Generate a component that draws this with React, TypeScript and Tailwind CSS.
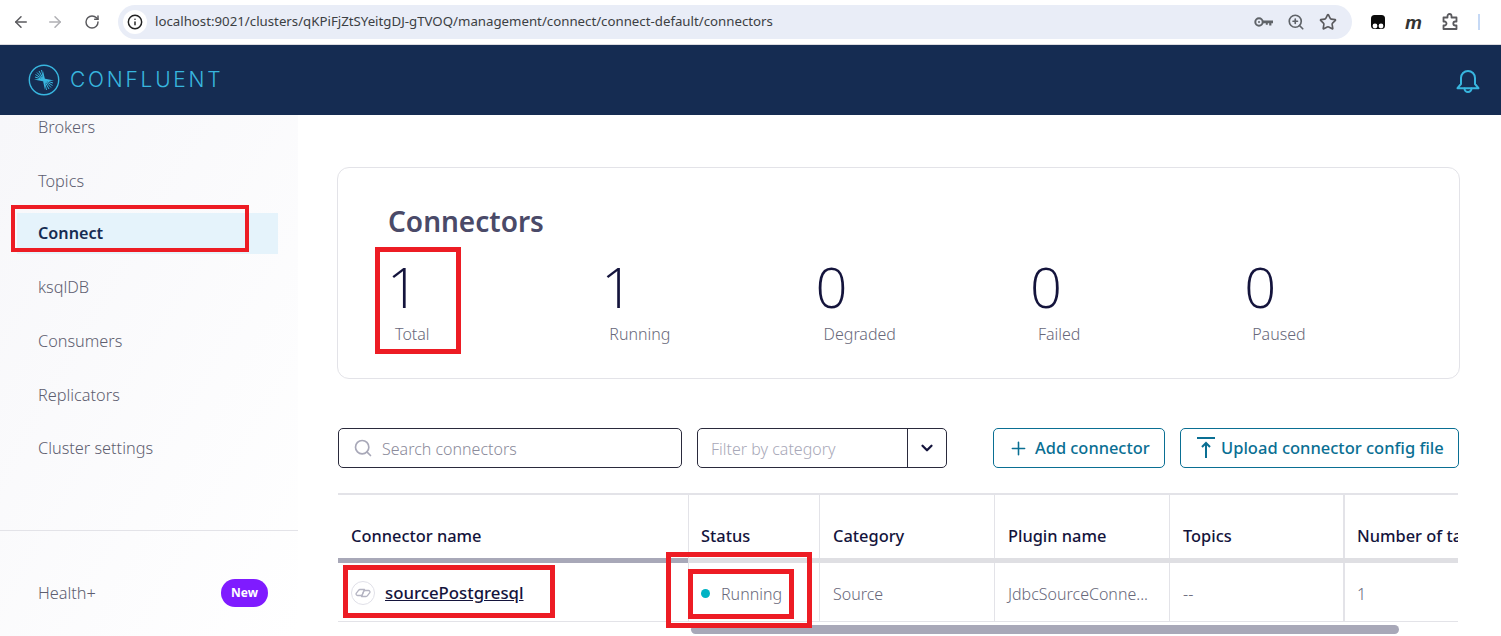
import { ArrowLeft, ArrowRight, RotateCw, Info, ZoomIn, Star, Search, ChevronDown, Plus } from "lucide-react";

const font = { fontFamily: '"Noto Sans", sans-serif' };

function KeyIcon() {
  return (
    <svg width="19" height="12" viewBox="0 0 19 12" fill="none">
      <circle cx="5" cy="6" r="3.7" stroke="#5f6368" strokeWidth="2" />
      <circle cx="5" cy="6" r="1" fill="#5f6368" />
      <path d="M9 4.5h10v2.8h-1.6V9.6h-2.2V7.3h-1.4v1.5h-2V7.3H9z" fill="#5f6368" />
    </svg>
  );
}

function Tamper() {
  return (
    <svg width="16" height="16" viewBox="0 0 16 16">
      <rect x="1" y="1" width="14" height="14" rx="3.5" fill="#0b0b0b" />
      <circle cx="5" cy="12" r="2.4" fill="#fff" />
      <circle cx="11" cy="12" r="2.4" fill="#fff" />
    </svg>
  );
}

function ExtensionIcon() {
  return (
    <svg width="18" height="18" viewBox="0 0 18 18" fill="none" stroke="#5a5a5e" strokeWidth="1.8" strokeLinejoin="round">
      <path d="M2.5 4.5H6.5V3a2 2 0 0 1 4 0v1.5h5v4h-1.2a2 2 0 0 0 0 4h1.2v3.5H2.5V12.5h1a2 2 0 0 0 0-4h-1z" />
    </svg>
  );
}

function BellIcon() {
  return (
    <svg width="24" height="25" viewBox="0 0 24 25" fill="none" stroke="#38b6df" strokeWidth="2" strokeLinejoin="round" strokeLinecap="round">
      <path d="M5 15V9a7 7 0 0 1 14 0v6l3.5 4.2H1.5z" />
      <path d="M8.5 19.5a3.5 3.5 0 0 0 7 0" />
    </svg>
  );
}

function Logo() {
  const rays = [
    [7, 13], [7.5, 10.5], [9, 8.5], [11, 7], [13.5, 6],
    [25, 19], [24.5, 21.5], [23, 23.5], [21, 25], [18.5, 26],
  ];
  return (
    <svg width="32" height="32" viewBox="0 0 32 32" fill="none" stroke="#38b6df">
      <circle cx="16" cy="16" r="14.7" strokeWidth="1.4" />
      {rays.map((r, i) => (
        <line key={i} x1="16" y1="16" x2={r[0]} y2={r[1]} strokeWidth="1" />
      ))}
      <path d="M6 15.5L16 14.6 26 16.5 16 17.4zM15 7L17.2 16 17 26 14.8 16z" fill="#38b6df" stroke="none" />
    </svg>
  );
}

function UploadIcon() {
  return (
    <svg width="20" height="24" viewBox="0 0 20 24" fill="none" stroke="#0a6f93" strokeWidth="2">
      <path d="M1 2h18" />
      <path d="M10 22V7" />
      <path d="M6 11l4-4 4 4" />
    </svg>
  );
}

function ConnectorBadge() {
  return (
    <svg width="24" height="24" viewBox="0 0 24 24" fill="none">
      <circle cx="12" cy="12" r="11.5" stroke="#e0e0e8" />
      <g stroke="#b4b4c2" strokeWidth="1.3" strokeLinejoin="round">
        <path d="M9 8.5H13.5L11 14.5H6.5a1.5 1.5 0 0 1-1.3-2.2L7.5 9.3A2 2 0 0 1 9 8.5z" />
        <path d="M15 15.5H10.5L13 9.5H17.5a1.5 1.5 0 0 1 1.3 2.2L16.5 14.7A2 2 0 0 1 15 15.5z" />
      </g>
    </svg>
  );
}

function NavItem({ label, active }: { label: string; active?: boolean }) {
  return (
    <div
      className={
        active
          ? "ml-[17px] mr-[20px] -mt-[1.5px] mb-[0.5px] h-[41px] pl-[21px] flex items-center bg-[#e5f3fb] text-[#152c52] font-semibold text-[16.2px]"
          : "ml-[17px] mr-[20px] h-[41px] pl-[21px] flex items-center text-[#5e5e70] font-light text-[16.3px]"
      }
    >
      {label}
    </div>
  );
}

function Stat({ n, label }: { n: string; label: string }) {
  return (
    <div className="w-[214.3px] shrink-0">
      <div className="h-[75px] pt-[10px] -ml-[1px] text-[56px] leading-[56px] font-light text-[#14143c]" style={{ fontFamily: '"Open Sans", sans-serif' }}>{n}</div>
      <div className="pl-[7px] text-[16px] leading-[22px] font-light text-[#68687a]">{label}</div>
    </div>
  );
}

const COLS = [
  { w: "w-[350px]", title: "Connector name", border: "", pad: "pl-[13px]" },
  { w: "w-[131px]", title: "Status", border: "border-l border-[#e3e3e8]", pad: "pl-[12px]" },
  { w: "w-[175px]", title: "Category", border: "border-l border-[#e3e3e8]", pad: "pl-[13px]" },
  { w: "w-[175px]", title: "Plugin name", border: "border-l border-[#e3e3e8]", pad: "pl-[13px]" },
  { w: "w-[174px]", title: "Topics", border: "border-l border-[#e3e3e8]", pad: "pl-[13px]" },
  { w: "w-[115px]", title: "Number of tasks", border: "border-l-2 border-[#e3e3e8]", pad: "pl-[12px]" },
];

export default function App() {
  return (
    <div className="relative w-[1501px] h-[636px] overflow-hidden bg-white flex flex-col" style={font}>
      {/* browser bar */}
      <div className="h-[45px] shrink-0 flex items-center bg-white border-b border-[#dcdce0]">
        <div className="w-[118px] shrink-0 flex items-center pl-[12px] gap-[16px]">
          <ArrowLeft size={18} color="#5a5a5e" strokeWidth={2} />
          <ArrowRight size={18} color="#b0b0b4" strokeWidth={2} />
          <RotateCw size={16} color="#5a5a5e" strokeWidth={2.2} className="ml-[4px]" />
        </div>
        <div className="w-[1234px] h-[34px] rounded-full bg-[#e9edf7] flex items-center pl-[5px] pr-[15px]">
          <div className="w-[24px] h-[24px] bg-white rounded-full flex items-center justify-center shrink-0">
            <Info size={16} color="#222" strokeWidth={2.2} />
          </div>
          <span className="ml-[8px] text-[13.26px] text-[#3c4043] font-normal whitespace-nowrap">
            localhost:9021/clusters/qKPiFjZtSYeitgDJ-gTVOQ/management/connect/connect-default/connectors
          </span>
          <div className="ml-auto flex items-center gap-[14px]">
            <KeyIcon />
            <ZoomIn size={18} color="#5f6368" strokeWidth={2.2} />
            <Star size={18} color="#5a5a5e" strokeWidth={2.2} />
          </div>
        </div>
        <div className="flex items-center pl-[18px]">
          <Tamper />
          <span className="ml-[19px] text-[19px] font-bold italic text-[#333] leading-none" style={{ fontFamily: '"Liberation Sans", sans-serif' }}>m</span>
          <div className="ml-[19px]"><ExtensionIcon /></div>
          <div className="ml-[19px] w-[2px] h-[16px] bg-[#c6d9f5]" />
        </div>
      </div>

      {/* app header */}
      <div className="h-[70px] shrink-0 bg-[#152c52] flex items-center pl-[28px] pr-[21px]">
        <Logo />
        <span className="ml-[10px] text-[21px] tracking-[2.75px] text-[#38b6df] font-light" style={{ fontFamily: '"Inter", sans-serif' }}>CONFLUENT</span>
        <div className="ml-auto mt-[2px]"><BellIcon /></div>
      </div>

      <div className="flex flex-1 min-h-0">
        {/* sidebar */}
        <aside className="w-[298px] shrink-0 bg-gradient-to-br from-[#f7f7fa] to-white flex flex-col">
          <div className="-mt-[8px] flex flex-col gap-[12.7px]">
            <NavItem label="Brokers" />
            <NavItem label="Topics" />
            <NavItem label="Connect" active />
            <NavItem label="ksqlDB" />
            <NavItem label="Consumers" />
            <NavItem label="Replicators" />
            <NavItem label="Cluster settings" />
          </div>
          <div className="mt-[61px] border-t border-[#e3e3e8] flex items-center justify-between pl-[38px] pr-[30px] pt-[48px]">
            <span className="text-[16.3px] font-light text-[#5e5e70]">Health+</span>
            <span className="w-[47px] h-[28px] rounded-full bg-[#7f1bff] text-white text-[12px] font-bold flex items-center justify-center">New</span>
          </div>
        </aside>

        {/* main */}
        <main className="flex-1 min-w-0 pl-[39px] pr-[41px] pt-[52px]">
          <section className="h-[212px] w-[1123px] border border-[#e3e3e8] rounded-[12px] pl-[50px] pt-[35px]">
            <h1 className="text-[28px] leading-[36px] font-semibold text-[#4a4a68]">Connectors</h1>
            <div className="flex mt-[9px]">
              <Stat n="1" label="Total" />
              <Stat n="1" label="Running" />
              <Stat n="0" label="Degraded" />
              <Stat n="0" label="Failed" />
              <Stat n="0" label="Paused" />
            </div>
          </section>

          <div className="flex items-center h-[40px] mt-[49px] ml-[1px]">
            <div className="w-[344px] h-[40px] border border-[#2a2a3c] rounded-[5px] flex items-center pl-[14px] gap-[9px]">
              <Search size={20} color="#a8a8b8" strokeWidth={2} />
              <span className="text-[16px] font-light text-[#8a8a9a] pt-[2px]">Search connectors</span>
            </div>
            <div className="ml-[15px] w-[250px] h-[40px] border border-[#2a2a3c] rounded-[5px] flex items-center">
              <span className="flex-1 pl-[13px] text-[16px] font-light text-[#a8a8b8] pt-[1px]">Filter by category</span>
              <div className="w-[39px] h-full border-l border-[#2a2a3c] flex items-center justify-center">
                <ChevronDown size={18} color="#14143c" strokeWidth={3} />
              </div>
            </div>
            <button className="ml-[46px] w-[172px] h-[40px] border border-[#0a6f93] rounded-[5px] flex items-center pl-[14px] gap-[6px] text-[#0a6f93] text-[16.4px] font-medium">
              <Plus size={21} strokeWidth={1.8} />
              <span className="pt-[1px]">Add connector</span>
            </button>
            <button className="ml-[15px] w-[279px] h-[40px] border border-[#0a6f93] rounded-[5px] flex items-center pl-[15px] gap-[5px] text-[#0a6f93] text-[16.5px] font-medium whitespace-nowrap">
              <UploadIcon />
              <span className="pt-[1px]">Upload connector config file</span>
            </button>
          </div>

          {/* table */}
          <div className="w-[1120px] ml-[1px] mt-[25px] overflow-hidden border-t-2 border-[#e3e3e8]">
            <div className="flex h-[63px]">
              {COLS.map((c) => (
                <div key={c.title} className={`${c.w} ${c.border} ${c.pad} shrink-0 flex items-center pt-[19px] text-[16.4px] font-medium text-[#14143c] whitespace-nowrap overflow-hidden`}>
                  {c.title}
                </div>
              ))}
            </div>
            <div className="flex h-[5px] bg-[#dfdfe3]">
              <div className="w-[350px] bg-[#a8a8b8]" />
            </div>
            <div className="flex h-[59px] border-b border-[#e3e3e8] text-[16px] font-light text-[#68687a]">
              <div className="w-[350px] shrink-0 pl-[13px] flex items-center gap-[10px] pt-[2px]">
                <ConnectorBadge />
                <span className="text-[16.8px] font-medium underline text-[#14143c]">sourcePostgresql</span>
              </div>
              <div className="w-[131px] shrink-0 border-l border-[#e3e3e8] pl-[12px] flex items-center gap-[11px] pt-[3px]">
                <span className="w-[9px] h-[9px] rounded-full bg-[#00b3c4]" />
                Running
              </div>
              <div className="w-[175px] shrink-0 border-l border-[#e3e3e8] pl-[13px] flex items-center pt-[3px]">Source</div>
              <div className="w-[175px] shrink-0 border-l border-[#e3e3e8] pl-[13px] flex items-center whitespace-nowrap pt-[3px]">JdbcSourceConne...</div>
              <div className="w-[174px] shrink-0 border-l border-[#e3e3e8] pl-[13px] flex items-center pt-[3px]">--</div>
              <div className="w-[115px] shrink-0 border-l-2 border-[#e3e3e8] pl-[12px] flex items-center pt-[3px]">1</div>
            </div>
            <div className="h-[13px] pt-[3px] pl-[353px]">
              <div className="w-[708px] h-[9px] rounded-full bg-[#a8a8b8]" />
            </div>
          </div>
        </main>
      </div>

      {/* red annotations */}
      <div className="absolute left-[11px] top-[205px] w-[238px] h-[47px] border-[4px] border-[#ed1c24]" />
      <div className="absolute left-[375px] top-[247px] w-[86px] h-[107px] border-[5px] border-[#ed1c24]" />
      <div className="absolute left-[343px] top-[565px] w-[212px] h-[53px] border-[5px] border-[#ed1c24]" />
      <div className="absolute left-[666px] top-[552px] w-[146px] h-[76px] border-[5px] border-[#ed1c24]" />
      <div className="absolute left-[688px] top-[569px] w-[106px] h-[50px] border-[5px] border-[#ed1c24]" />
    </div>
  );
}
